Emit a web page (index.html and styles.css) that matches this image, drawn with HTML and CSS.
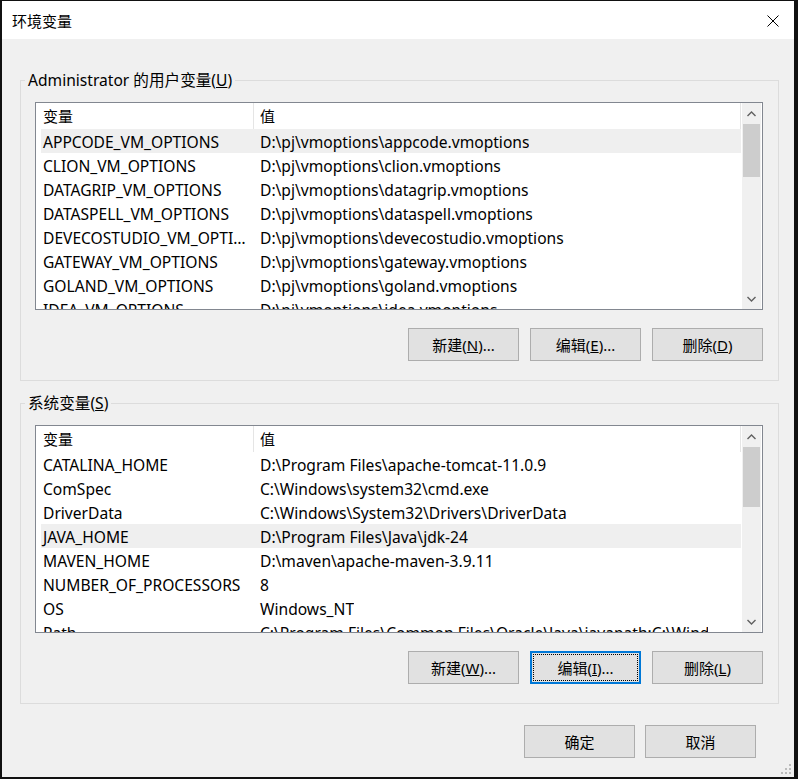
FILE: index.html
```html
<!DOCTYPE html>
<html lang="zh-CN">
<head>
  <meta charset="UTF-8">
  <title>环境变量</title>
  <link rel="stylesheet" href="styles.css">
</head>
<body>

  <div class="window">
    <div class="titlebar">
      <span class="title">环境变量</span>
      <span class="close">
        <svg width="12" height="12" viewBox="0 0 12 12"><path d="M0.5 0.5L11.5 11.5M11.5 0.5L0.5 11.5" stroke="#000" stroke-width="1" fill="none"/></svg>
      </span>
    </div>

    <div class="content">
      <fieldset class="group">
        <legend>Administrator 的用户变量(<u>U</u>)</legend>
        <div class="list">
          <div class="list-body">
            <div class="header">
              <div class="h1">变量</div>
              <div class="h2">值</div>
            </div>
            <div class="row sel"><div class="c1">APPCODE_VM_OPTIONS</div><div class="c2">D:\pj\vmoptions\appcode.vmoptions</div></div>
            <div class="row"><div class="c1">CLION_VM_OPTIONS</div><div class="c2">D:\pj\vmoptions\clion.vmoptions</div></div>
            <div class="row"><div class="c1">DATAGRIP_VM_OPTIONS</div><div class="c2">D:\pj\vmoptions\datagrip.vmoptions</div></div>
            <div class="row"><div class="c1">DATASPELL_VM_OPTIONS</div><div class="c2">D:\pj\vmoptions\dataspell.vmoptions</div></div>
            <div class="row"><div class="c1">DEVECOSTUDIO_VM_OPTIONS</div><div class="c2">D:\pj\vmoptions\devecostudio.vmoptions</div></div>
            <div class="row"><div class="c1">GATEWAY_VM_OPTIONS</div><div class="c2">D:\pj\vmoptions\gateway.vmoptions</div></div>
            <div class="row"><div class="c1">GOLAND_VM_OPTIONS</div><div class="c2">D:\pj\vmoptions\goland.vmoptions</div></div>
            <div class="row"><div class="c1">IDEA_VM_OPTIONS</div><div class="c2">D:\pj\vmoptions\idea.vmoptions</div></div>
          </div>
          <div class="scrollbar">
            <div class="arrow up"><svg width="9" height="6" viewBox="0 0 9 6"><path d="M0.5 5L4.5 1L8.5 5" stroke="#606060" stroke-width="1.4" fill="none"/></svg></div>
            <div class="track"><div class="thumb thumb1"></div></div>
            <div class="arrow down"><svg width="9" height="6" viewBox="0 0 9 6"><path d="M0.5 1L4.5 5L8.5 1" stroke="#606060" stroke-width="1.4" fill="none"/></svg></div>
          </div>
        </div>
        <div class="buttons">
          <button>新建(<u>N</u>)...</button>
          <button>编辑(<u>E</u>)...</button>
          <button>删除(<u>D</u>)</button>
        </div>
      </fieldset>

      <fieldset class="group second">
        <legend>系统变量(<u>S</u>)</legend>
        <div class="list">
          <div class="list-body">
            <div class="header">
              <div class="h1">变量</div>
              <div class="h2">值</div>
            </div>
            <div class="row"><div class="c1">CATALINA_HOME</div><div class="c2">D:\Program Files\apache-tomcat-11.0.9</div></div>
            <div class="row"><div class="c1">ComSpec</div><div class="c2">C:\Windows\system32\cmd.exe</div></div>
            <div class="row"><div class="c1">DriverData</div><div class="c2">C:\Windows\System32\Drivers\DriverData</div></div>
            <div class="row sel"><div class="c1">JAVA_HOME</div><div class="c2">D:\Program Files\Java\jdk-24</div></div>
            <div class="row"><div class="c1">MAVEN_HOME</div><div class="c2">D:\maven\apache-maven-3.9.11</div></div>
            <div class="row"><div class="c1">NUMBER_OF_PROCESSORS</div><div class="c2">8</div></div>
            <div class="row"><div class="c1">OS</div><div class="c2">Windows_NT</div></div>
            <div class="row"><div class="c1">Path</div><div class="c2">C:\Program Files\Common Files\Oracle\Java\javapath;C:\Windows\system32</div></div>
          </div>
          <div class="scrollbar">
            <div class="arrow up"><svg width="9" height="6" viewBox="0 0 9 6"><path d="M0.5 5L4.5 1L8.5 5" stroke="#606060" stroke-width="1.4" fill="none"/></svg></div>
            <div class="track"><div class="thumb thumb2"></div></div>
            <div class="arrow down"><svg width="9" height="6" viewBox="0 0 9 6"><path d="M0.5 1L4.5 5L8.5 1" stroke="#606060" stroke-width="1.4" fill="none"/></svg></div>
          </div>
        </div>
        <div class="buttons">
          <button>新建(<u>W</u>)...</button>
          <button class="focused"><span class="focus-rect">编辑(<u>I</u>)...</span></button>
          <button>删除(<u>L</u>)</button>
        </div>
      </fieldset>

      <div class="footer">
        <button>确定</button>
        <button>取消</button>
      </div>
    </div>

    <div class="grip">
      <svg width="10" height="10" viewBox="0 0 10 10" fill="#bcbcbc">
        <rect x="8" y="0" width="2" height="2"/>
        <rect x="4" y="4" width="2" height="2"/><rect x="8" y="4" width="2" height="2"/>
        <rect x="0" y="8" width="2" height="2"/><rect x="4" y="8" width="2" height="2"/><rect x="8" y="8" width="2" height="2"/>
      </svg>
    </div>
  </div>

</body>
</html>
```

FILE: styles.css
```css
html, body {
  margin: 0;
  padding: 0;
  background: #111;
}
body {
  font-family: "Noto Sans", "Noto Sans CJK SC", sans-serif;
  font-size: 15.6px;
  color: #000;
  padding: 1px 4px 2px 2px;
  width: 792px;
}
.window {
  position: relative;
  width: 792px;
  height: 776px;
  background: #f0f0f0;
  display: flex;
  flex-direction: column;
}
.titlebar {
  height: 38px;
  background: #fff;
  display: flex;
  align-items: center;
  justify-content: space-between;
  padding: 0 15px 0 10px;
}
.title {
  font-family: "Noto Sans CJK SC", sans-serif;
  font-size: 15px;
}
.close {
  display: flex;
  margin-top: 1px;
}
.content {
  padding: 31px 15px 0 18px;
}
.group {
  margin: 0;
  padding: 12px 15px 19px 14px;
  border: 1px solid #dcdcdc;
  min-width: 0;
}
.group.second {
  margin-top: 12px;
}
.group legend {
  padding: 0 3px;
  margin-left: -10px;
  line-height: 20px;
}
.list {
  height: 206px;
  border: 1px solid #828790;
  background: #fff;
  display: flex;
}
.list-body {
  flex: 1;
  overflow: hidden;
}
.header {
  height: 26px;
  display: flex;
  align-items: center;
  font-size: 15px;
}
.h1 {
  width: 210px;
  padding-left: 7px;
  height: 26px;
  line-height: 26px;
  border-right: 1px solid #e5e5e5;
}
.h2 {
  flex: 1;
  padding-left: 6px;
  height: 26px;
  line-height: 26px;
  border-right: 1px solid #e5e5e5;
}
.row {
  height: 24px;
  line-height: 26px;
  margin-left: 5px;
  display: flex;
  white-space: nowrap;
}
.row.sel {
  background: #efefef;
}
.c1 {
  flex-shrink: 0;
  width: 209px;
  padding: 0 6px 0 2px;
  overflow: hidden;
  text-overflow: ellipsis;
}
.c2 {
  max-width: 448px;
  padding-left: 2px;
  overflow: hidden;
}
.scrollbar {
  width: 19px;
  margin: 0 1px 0 1px;
  background: #f0f0f0;
  display: flex;
  flex-direction: column;
}
.arrow {
  height: 21px;
  display: flex;
  align-items: center;
  justify-content: center;
}
.track {
  flex: 1;
  padding: 0 1px;
}
.thumb {
  background: #cdcdcd;
}
.thumb1 {
  height: 53px;
}
.thumb2 {
  height: 60px;
}
.buttons {
  display: flex;
  justify-content: flex-end;
  gap: 11px;
  margin-top: 18px;
}
button {
  width: 111px;
  height: 33px;
  background: #e1e1e1;
  border: 1px solid #adadad;
  font-family: "Noto Sans", "Noto Sans CJK SC", sans-serif;
  font-size: 15px;
  line-height: 28px;
  color: #000;
  padding: 0;
}
button.focused {
  border: 2px solid #0078d7;
  padding: 1px;
}
.focus-rect {
  display: flex;
  align-items: center;
  justify-content: center;
  height: 100%;
  border: 1px dotted #000;
  box-sizing: border-box;
}
.footer {
  display: flex;
  justify-content: flex-end;
  gap: 10px;
  margin-top: 21px;
  padding-right: 23px;
}
.grip {
  position: absolute;
  right: 3px;
  bottom: 3px;
  display: flex;
}
```
